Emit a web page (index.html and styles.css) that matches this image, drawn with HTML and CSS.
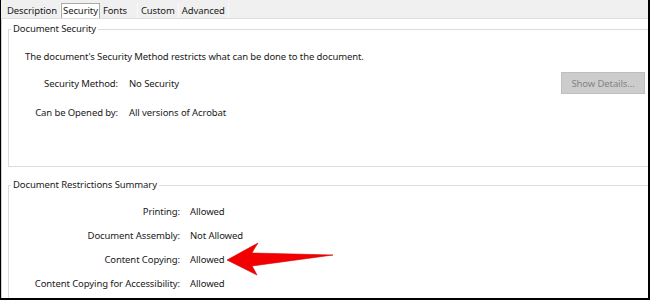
FILE: index.html
```html
<!DOCTYPE html>
<html lang="en">
<head>
    <meta charset="UTF-8">
    <title>Document Properties - Security</title>
    <link rel="stylesheet" href="styles.css">
</head>
<body>
    <div class="window">
        <div class="tabs">
            <div class="tab">Description</div>
            <div class="tab active">Security</div>
            <div class="tab tab-wide">Fonts</div>
            <div class="tab">Custom</div>
            <div class="tab">Advanced</div>
        </div>

        <div class="panel">
            <fieldset class="group">
                <legend>Document Security</legend>
                <p class="intro">The document's Security Method restricts what can be done to the document.</p>
                <div class="props security-props">
                    <span class="label">Security Method:</span>
                    <span>No Security</span>
                    <button class="details" disabled>Show Details...</button>
                    <span class="label">Can be Opened by:</span>
                    <span>All versions of Acrobat</span>
                    <span></span>
                </div>
            </fieldset>

            <fieldset class="group">
                <legend>Document Restrictions Summary</legend>
                <div class="props restriction-props">
                    <span class="label">Printing:</span>
                    <span>Allowed</span>
                    <span class="label">Document Assembly:</span>
                    <span>Not Allowed</span>
                    <span class="label">Content Copying:</span>
                    <span>Allowed</span>
                    <span class="label">Content Copying for Accessibility:</span>
                    <span>Allowed</span>
                </div>
            </fieldset>
        </div>

        <!-- callout arrow pointing at the Content Copying value -->
        <svg class="arrow" viewBox="225 240 112 38" width="112" height="38">
            <path d="M227,260 L258,243 Q254,249 252,253 L333,255 L252,266 Q255,271 257,275 Z" fill="#f20000" stroke="#d80000" stroke-width="0.6" stroke-linejoin="round"/>
        </svg>
    </div>
</body>
</html>
```

FILE: styles.css
```css
body {
    margin: 0;
    font-family: "Noto Sans", "Open Sans", sans-serif;
    font-size: 9.5px;
    letter-spacing: -0.1px;
    color: #1a1a1a;
    background-color: white;
}
.window {
    position: relative;
    width: 650px;
    height: 300px;
    box-sizing: border-box;
    border: solid #000;
    border-width: 0 2px 2px 1px;
    overflow: hidden;
    background-color: white;
}
.tabs {
    display: flex;
    align-items: flex-end;
    height: 18px;
    padding-left: 1px;
    background-color: #f0f0f0;
    border-bottom: 1px solid #dedede;
}
.tab {
    height: 15px;
    line-height: 15px;
    padding: 0 3px;
    box-sizing: border-box;
    border-right: 1px solid #fafafa;
    color: #1a1a1a;
}
.tab:first-child {
    padding-left: 5px;
}
.tab-wide {
    width: 38px;
}
.tab.active {
    background-color: white;
    border: 1px solid #a9a9a9;
    border-bottom: none;
    line-height: 13px;
    padding: 0 1px;
}
.panel {
    border-left: 1px solid #cfcfcf;
    padding: 3px 0 0 6px;
    height: 100%;
}
.group {
    margin: 0 -20px 0 0;
    padding: 13px 22px 46px 16px;
    border: 1px solid #dcdcdc;
}
.group + .group {
    margin-top: 11px;
    padding-top: 12px;
}
.group legend {
    margin-left: -14px;
    padding: 0 2px;
    line-height: 14px;
}
.intro {
    margin: 0;
    line-height: 15px;
}
.props {
    display: grid;
    align-items: center;
    line-height: 15px;
}
.security-props {
    grid-template-columns: 93px 1fr auto;
    column-gap: 11px;
    row-gap: 11px;
    margin-top: 8px;
}
.restriction-props {
    grid-template-columns: 155px 1fr;
    column-gap: 10px;
    row-gap: 9px;
}
.label {
    text-align: right;
}
.details {
    width: 84px;
    height: 22px;
    padding: 0;
    font-family: inherit;
    font-size: inherit;
    letter-spacing: inherit;
    color: #848484;
    background-color: #cccccc;
    border: 1px solid #bfbfbf;
}
.arrow {
    position: absolute;
    left: 224px;
    top: 240px;
}
```
